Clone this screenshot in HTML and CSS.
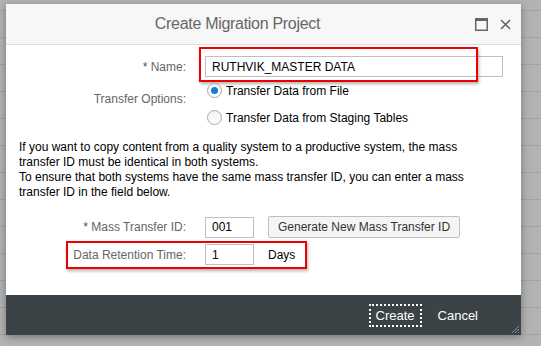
FILE: index.html
```html
<!DOCTYPE html>
<html lang="en">
<head>
    <meta charset="UTF-8">
    <title>Create Migration Project</title>
    <link rel="stylesheet" href="styles.css">
</head>
<body>
    <div class="dialog">
        <div class="dialog-header">
            <div class="dialog-title">Create Migration Project</div>
            <div class="header-icons">
                <svg class="icon" width="13" height="13" viewBox="0 0 13 13">
                    <rect x="0.75" y="0.75" width="11.5" height="11.5" fill="none" stroke="#666" stroke-width="1.5"/>
                    <rect x="0" y="0" width="13" height="3" fill="#666"/>
                </svg>
                <svg class="icon" width="11" height="11" viewBox="0 0 11 11">
                    <path d="M1 1 L10 10 M10 1 L1 10" stroke="#666" stroke-width="1.6"/>
                </svg>
            </div>
        </div>
        <div class="dialog-body">
            <div class="form-row row-name">
                <label class="label"><span class="req">*</span> Name:</label>
                <input class="field field-wide" type="text" value="RUTHVIK_MASTER DATA">
                <div class="highlight hl-name"></div>
            </div>
            <div class="form-row row-options">
                <label class="label">Transfer Options:</label>
                <div class="radio-group">
                    <div class="radio-item"><span class="radio checked"></span>Transfer Data from File</div>
                    <div class="radio-item"><span class="radio"></span>Transfer Data from Staging Tables</div>
                </div>
            </div>
            <p class="info">
                If you want to copy content from a quality system to a productive system, the mass
                transfer ID must be identical in both systems.<br>
                To ensure that both systems have the same mass transfer ID, you can enter a mass
                transfer ID in the field below.
            </p>
            <div class="form-row row-id">
                <label class="label"><span class="req">*</span> Mass Transfer ID:</label>
                <input class="field field-small" type="text" value="001">
                <button class="btn">Generate New Mass Transfer ID</button>
            </div>
            <div class="form-row row-retention">
                <label class="label">Data Retention Time:</label>
                <input class="field field-small" type="text" value="1">
                <span class="unit">Days</span>
                <div class="highlight hl-retention"></div>
            </div>
        </div>
        <div class="dialog-footer">
            <button class="footer-btn focused">Create</button>
            <button class="footer-btn">Cancel</button>
            <svg class="grip" width="10" height="10" viewBox="0 0 10 10">
                <path d="M9 2 L2 9 M9 5 L5 9 M9 8 L8 9" stroke="#8a8f91" stroke-width="1"/>
            </svg>
        </div>
    </div>
</body>
</html>
```

FILE: styles.css
```css
body {
    margin: 0;
    height: 346px;
    overflow: hidden;
    font-family: "Liberation Sans", Arial, sans-serif;
    background-color: #b3b3b3;
    background-image: linear-gradient(to bottom, transparent 26px, #a3a3a3 26px);
    background-size: 100% 27px;
    background-position: 0 11px;
}
.dialog {
    position: relative;
    width: 515px;
    margin: 4px 0 0 6px;
    background: #fff;
    box-shadow: 0 2px 8px rgba(0, 0, 0, 0.35);
}
.dialog-header {
    height: 40px;
    background: #f7f7f7;
    border-bottom: 1px solid #dcdcdc;
    display: flex;
    align-items: center;
    position: relative;
}
.dialog-title {
    flex: 1;
    text-align: center;
    padding-right: 52px;
    font-size: 16px;
    letter-spacing: -0.3px;
    color: #666;
}
.header-icons {
    position: absolute;
    right: 10px;
    top: 14px;
    display: flex;
    gap: 12px;
    align-items: center;
}
.icon { display: block; }
.dialog-body {
    height: 250px;
    padding-top: 11px;
    box-sizing: border-box;
}
.form-row {
    display: flex;
    align-items: center;
    position: relative;
}
.label {
    width: 199px;
    text-align: right;
    padding-right: 19px;
    box-sizing: border-box;
    font-size: 12px;
    color: #666;
    flex-shrink: 0;
}
.req { color: #1a5c99; }
.field {
    height: 21px;
    border: 1px solid #bfbfbf;
    box-sizing: border-box;
    padding: 0 6px;
    font-family: inherit;
    font-size: 12px;
    color: #000;
    outline: none;
}
.field-wide { width: 298px; }
.field-small { width: 49px; }
.row-options {
    align-items: flex-start;
    margin-top: 6px;
}
.row-options .label { margin-top: 9px; }
.radio-group {
    display: flex;
    flex-direction: column;
    gap: 12px;
    margin-left: 2px;
}
.radio-item {
    display: flex;
    align-items: center;
    font-size: 12px;
    color: #000;
    height: 15px;
}
.radio {
    width: 13px;
    height: 13px;
    border: 1px solid #a8a8a8;
    border-radius: 50%;
    background: linear-gradient(#f2f2f2, #fff);
    margin-right: 4px;
    position: relative;
    flex-shrink: 0;
}
.radio.checked::after {
    content: "";
    position: absolute;
    left: 3px;
    top: 3px;
    width: 7px;
    height: 7px;
    border-radius: 50%;
    background: #1a7ed0;
}
.info {
    width: 470px;
    margin: 15px 0 0 13px;
    font-size: 12px;
    line-height: 15px;
    color: #000;
}
.row-id { margin-top: 16px; }
.row-retention { margin-top: 6px; }
.btn {
    margin-left: 14px;
    height: 22px;
    padding: 0 9px;
    background: #f5f5f5;
    border: 1px solid #bfbfbf;
    border-radius: 2px;
    font-family: inherit;
    font-size: 12px;
    color: #333;
}
.unit {
    margin-left: 14px;
    font-size: 12px;
    color: #000;
}
.highlight {
    position: absolute;
    border: 2px solid #ee0000;
    box-shadow: 1px 2px 3px rgba(0, 0, 0, 0.3);
    pointer-events: none;
}
.hl-name {
    left: 193px;
    top: -9px;
    width: 275px;
    height: 31px;
}
.hl-retention {
    left: 60px;
    top: -3px;
    width: 237px;
    height: 24px;
}
.dialog-footer {
    height: 40px;
    background: #3b4346;
    display: flex;
    align-items: center;
    justify-content: flex-end;
    padding-right: 36px;
    gap: 9px;
    position: relative;
}
.footer-btn {
    background: none;
    border: 2px dotted transparent;
    color: #fff;
    font-family: inherit;
    font-size: 13px;
    height: 23px;
    padding: 0 5px;
}
.footer-btn.focused { border-color: #fff; }
.grip {
    position: absolute;
    right: 1px;
    bottom: 1px;
}
```
